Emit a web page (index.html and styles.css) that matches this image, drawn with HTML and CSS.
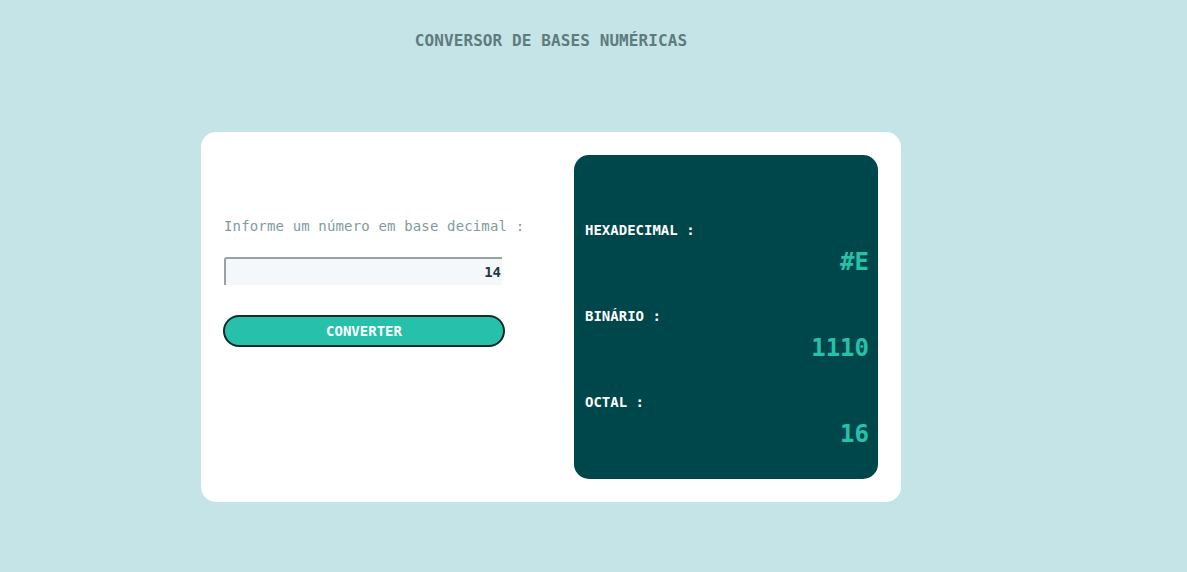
FILE: index.html
```html
<!DOCTYPE html>
<html lang="pt-BR">
<head>
<meta charset="utf-8">
<title>Conversor de Bases Numéricas</title>
<link rel="stylesheet" href="styles.css">
</head>
<body>
<main class="page">
  <h1 class="title">CONVERSOR DE BASES NUMÉRICAS</h1>
  <section class="card">
    <div class="form">
      <label class="form-label" for="num">Informe um número em base decimal :</label>
      <input class="form-input" id="num" type="text" value="14">
      <button class="btn" type="button">CONVERTER</button>
    </div>
    <div class="results">
      <div class="result">
        <div class="result-label">HEXADECIMAL :</div>
        <div class="result-value">#E</div>
      </div>
      <div class="result">
        <div class="result-label">BINÁRIO :</div>
        <div class="result-value">1110</div>
      </div>
      <div class="result">
        <div class="result-label">OCTAL :</div>
        <div class="result-value">16</div>
      </div>
    </div>
  </section>
</main>
</body>
</html>
```
FILE: styles.css
```css
* { box-sizing: border-box; }
html, body { margin: 0; padding: 0; }
body {
  background: #c5e4e7;
  font-family: "DejaVu Sans Mono", "Liberation Mono", monospace;
  min-height: 572px;
}
.page {
  width: 700px;
  margin-left: 201px;
  padding-top: 32px;
}
.title {
  margin: 0;
  text-align: center;
  font-size: 16px;
  line-height: 18px;
  font-weight: bold;
  color: #5e7b7e;
  letter-spacing: 0.1px;
}
.card {
  margin-top: 82px;
  background: #ffffff;
  border-radius: 15px;
  padding: 23px;
  display: flex;
  height: 370px;
}
.form {
  flex: 1;
  display: flex;
  flex-direction: column;
  align-items: flex-start;
  padding-top: 63px;
}
.form-label {
  font-size: 14px;
  line-height: 16px;
  color: #7f9c9e;
  letter-spacing: 0.15px;
}
.form-input {
  margin-top: 23px;
  width: 278px;
  height: 28px;
  background: #f4f8fb;
  border: none;
  border-top: 2px solid #9aa3a4;
  border-left: 2px solid #9aa3a4;
  border-radius: 3px 0 0 0;
  text-align: right;
  padding: 0 1px 0 4px;
  font-family: "DejaVu Sans Mono", monospace;
  font-weight: bold;
  font-size: 14px;
  color: #1d3b3d;
  outline: none;
}
.btn {
  margin-top: 30px;
  margin-left: -1px;
  width: 282px;
  height: 32px;
  border-radius: 16px;
  background: #26c0ab;
  border: 2px solid #0c2b2b;
  color: #ffffff;
  font-family: "DejaVu Sans Mono", monospace;
  font-weight: bold;
  font-size: 14px;
  padding: 0;
}
.results {
  width: 304px;
  background: #00474b;
  border-radius: 15px;
  padding: 67px 9px 0 11px;
  display: flex;
  flex-direction: column;
  gap: 32px;
}
.result {
  display: flex;
  flex-direction: column;
  gap: 10px;
}
.result-label {
  color: #ffffff;
  font-weight: bold;
  font-size: 14px;
  line-height: 16px;
}
.result-value {
  color: #26c0ab;
  font-weight: bold;
  font-size: 24px;
  line-height: 28px;
  text-align: right;
}
```
